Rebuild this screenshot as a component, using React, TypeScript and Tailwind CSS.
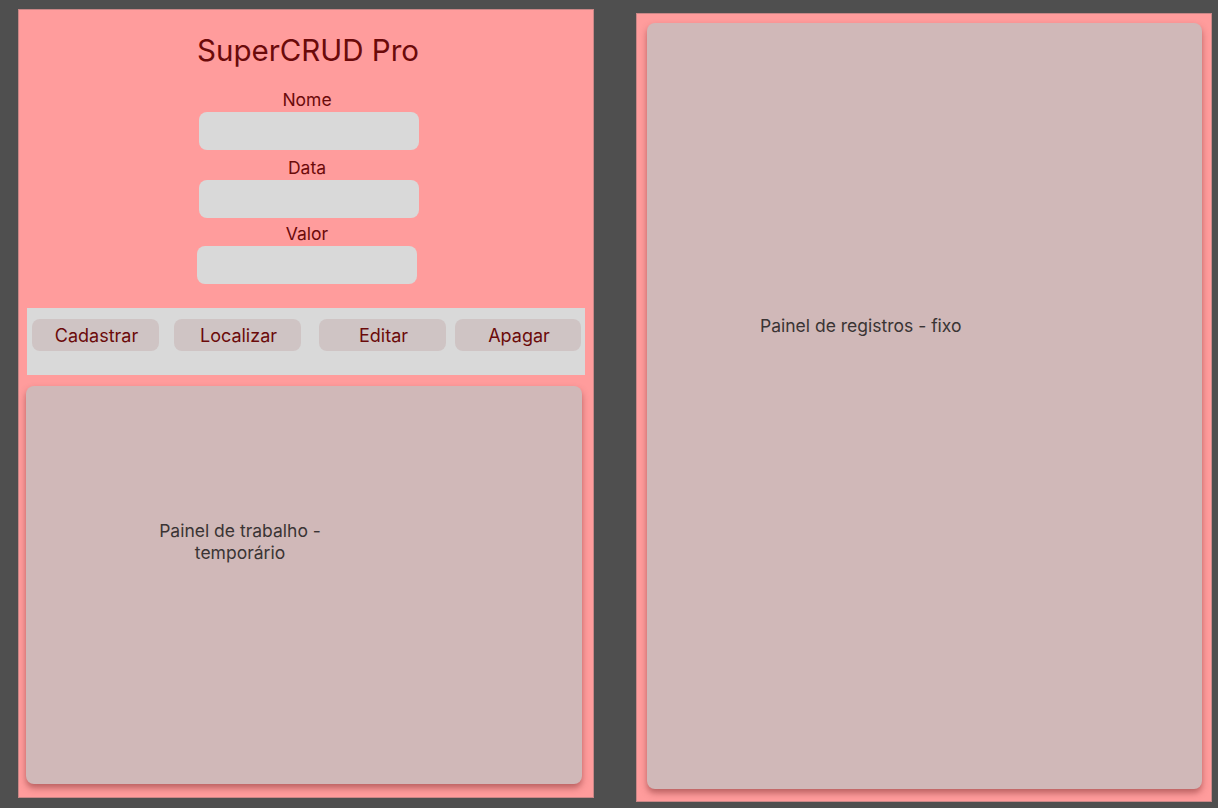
import React from "react";

const Field = ({ label, offset, mt }: { label: string; offset: string; mt: string }) => (
  <div className={`flex flex-col items-center ${mt}`}>
    <div className="mt-[2px] -translate-x-[2px] text-[17.5px] leading-[20px] text-[#6b0a0a]">{label}</div>
    <div className={`mt-[2px] w-[220px] h-[38px] rounded-[8px] bg-[#d9d9d9] ${offset}`} />
  </div>
);

const Btn = ({ children, w }: { children: React.ReactNode; w: string }) => (
  <div
    className={`h-[32px] ${w} rounded-[8px] bg-[#cfc4c4] flex items-center justify-center pl-[2px] text-[18px] text-[#6b0a0a]`}
  >
    {children}
  </div>
);

export default function App() {
  return (
    <div
      className="w-[1218px] h-[808px] bg-[#4f4f4f] flex overflow-hidden"
      style={{ fontFamily: "Inter, 'Noto Sans', sans-serif" }}
    >
      {/* Left panel */}
      <div className="ml-[18px] mt-[9px] w-[576px] h-[789px] bg-[#ff9c9c] border border-[#c98686] flex flex-col">
        <div className="mt-[22px] pl-[4px] text-center text-[29.5px] leading-[36px] text-[#6b0a0a]">SuperCRUD Pro</div>
        <div className="mt-[20px] flex flex-col pl-[6px]">
          <Field label="Nome" offset="translate-x-0" mt="mt-0" />
          <Field label="Data" offset="translate-x-0" mt="mt-[6px]" />
          <Field label="Valor" offset="-translate-x-[2px]" mt="mt-[4px]" />
        </div>
        <div className="mt-[24px] mx-[8px] h-[67px] bg-[#d9d9d9] pt-[11px] pl-[5px] flex">
          <Btn w="w-[127px]">Cadastrar</Btn>
          <div className="w-[15px]" />
          <Btn w="w-[127px]">Localizar</Btn>
          <div className="w-[18px]" />
          <Btn w="w-[127px]">Editar</Btn>
          <div className="w-[9px]" />
          <Btn w="w-[126px]">Apagar</Btn>
        </div>
        <div className="mt-[11px] ml-[7px] w-[556px] h-[398px] rounded-[8px] bg-[#d0b8b8] shadow-[0_4px_6px_rgba(120,40,40,0.5)]">
          <div className="mt-[134px] ml-[122px] w-[184px] text-center text-[17.5px] leading-[22px] text-[#3a3434]">
            Painel de trabalho - temporário
          </div>
        </div>
      </div>

      {/* Right panel */}
      <div className="ml-[42px] mt-[13px] w-[576px] h-[789px] bg-[#ff9c9c] border border-[#c98686] pt-[9px] pl-[10px]">
        <div className="w-[555px] h-[766px] rounded-[8px] bg-[#d0b8b8] shadow-[0_4px_6px_rgba(120,40,40,0.5)]">
          <div className="pt-[292px] pl-[113px] text-[17.5px] leading-[22px] text-[#3a3434]">
            Painel de registros - fixo
          </div>
        </div>
      </div>
    </div>
  );
}
